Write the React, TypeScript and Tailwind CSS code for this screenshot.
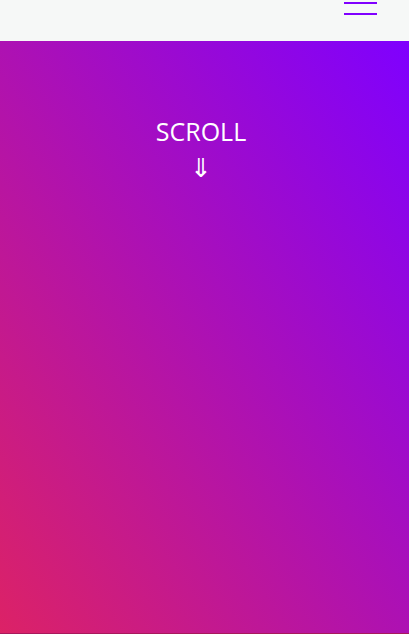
export default function App() {
  return (
    <div className="w-full h-[634px] overflow-hidden" style={{ fontFamily: '"Open Sans", "Noto Sans", sans-serif' }}>
      <header className="h-[41px] bg-[#f6f8f7] flex justify-end pr-[32px]">
        <button className="flex flex-col gap-[9px] pt-[2px] w-[33px]" aria-label="Menu">
          <span className="block h-[2px] w-full bg-[#8000ff]" />
          <span className="block h-[2px] w-full bg-[#8000ff]" />
        </button>
      </header>
      <section className="h-[593px] bg-[linear-gradient(to_top_right,#dc2266,#7f00ff)] border-b border-[#a8185c] flex flex-col items-center pt-[74px] pr-[7px] text-white">
        <div className="text-[25px] leading-[32px]">SCROLL</div>
        <div className="text-[26px] leading-[30px] mt-[5px]">⇓</div>
      </section>
    </div>
  );
}
